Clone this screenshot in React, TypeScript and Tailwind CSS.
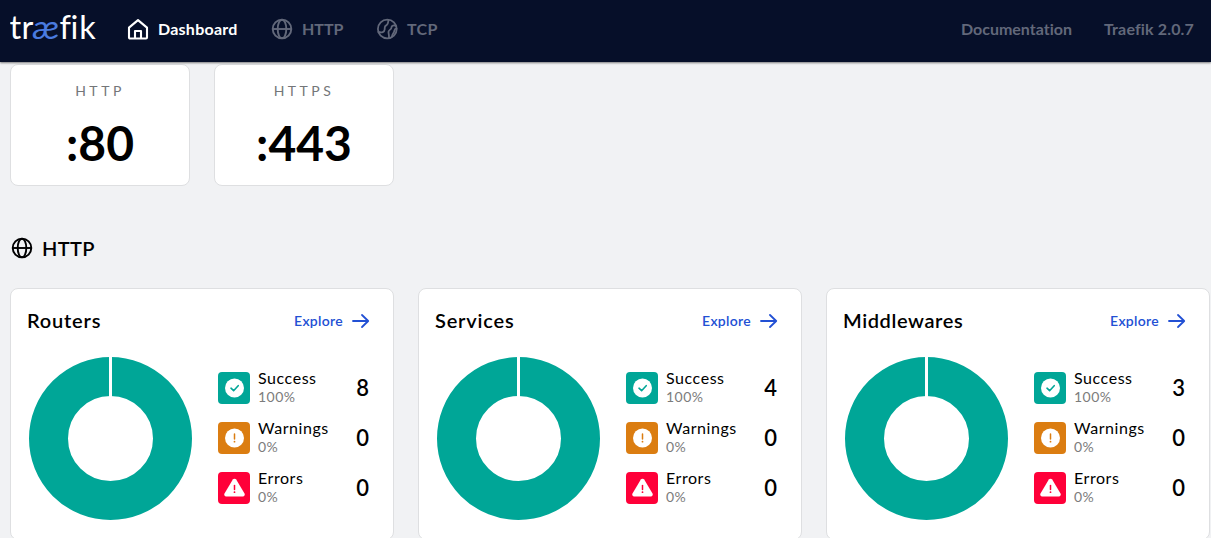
import type { ReactNode } from "react";

function Globe({ className }: { className: string }) {
  return (
    <svg viewBox="0 0 22 22" className={className} fill="none" stroke="currentColor" strokeWidth="1.9">
      <circle cx="11" cy="11" r="9.300" />
      <ellipse cx="11" cy="11" rx="4.300" ry="9.300" />
      <path d="M1.700 11H20.300" />
    </svg>
  );
}

function House() {
  return (
    <svg viewBox="0 0 22 22" className="h-[22px] w-[22px]" fill="none" stroke="currentColor" strokeWidth="2.100" strokeLinejoin="round">
      <path d="M2 9.600 11 2.100 20 9.600V19.500a1 1 0 0 1-1 1H3a1 1 0 0 1-1-1Z" />
      <path d="M8 20.500v-7.500h6v7.500" />
    </svg>
  );
}

function TcpBall() {
  return (
    <svg viewBox="0 0 22 22" className="h-[22px] w-[22px]" fill="none" stroke="currentColor" strokeWidth="1.800" strokeLinejoin="round" strokeLinecap="round">
      <circle cx="11.300" cy="11" r="9.400" />
      <path d="M2.300 13.800c3.600 1.200 6.200.4 6.400-2.600.1-2.100-.4-2.900 1.500-3.800C12 6.500 12.300 5 12.400 2" />
      <path d="M20.300 8.200c-2.200-1.400-5-.7-4.900 1.500.1 1.800-2.800 2-2.900 4.200-.1 1.900.9 3.300.4 6.200" />
      <path d="M20.400 10.300c-2.200.4-1.800 2.100-2.300 3.500-.5 1.500-2 2-2.200 5" />
    </svg>
  );
}

function Logo() {
  return (
    <svg viewBox="0 0 90 56" className="h-14 w-[90px] shrink-0" fontFamily="Lato, sans-serif" fontSize="32.500" fontWeight="400" fill="#fff">
      <text x="-0.500 11.500" y="38">tr</text>
      <text x="22.500" y="38" fontStyle="italic" textLength="27" lengthAdjust="spacingAndGlyphs" fill="#4a7be0">æ</text>
      <text x="49.500 60.500 69.200" y="38">fik</text>
    </svg>
  );
}

function PortCard({ label, port }: { label: string; port: string }) {
  return (
    <div className="flex h-[122px] w-[180px] flex-col items-center rounded-lg border border-[#dedfe1] bg-white pt-[16px]">
      <div className="text-[14px] leading-5 tracking-[3.500px] text-[#747679]">{label}</div>
      <div className="mt-3 text-[48px] leading-[60px] font-bold text-black">{port}</div>
    </div>
  );
}

const CheckBadge = (
  <svg viewBox="0 0 32 32" className="h-8 w-8">
    <circle cx="16.500" cy="16" r="9.500" fill="#fff" />
    <path d="m13 16.200 2.600 2.500 4.600-5" fill="none" stroke="#00a697" strokeWidth="1.600" strokeLinecap="round" strokeLinejoin="round" />
  </svg>
);

const WarningBadge = (
  <svg viewBox="0 0 32 32" className="h-8 w-8">
    <circle cx="16.500" cy="16" r="9.500" fill="#fff" />
    <path d="M16.500 12v5" stroke="#db7d11" strokeWidth="1.500" strokeLinecap="round" />
    <circle cx="16.500" cy="19.700" r="0.900" fill="#db7d11" />
  </svg>
);

const ErrorBadge = (
  <svg viewBox="0 0 32 32" className="h-8 w-8">
    <path d="M14.800 7.600a2 2 0 0 1 3.400 0l8.300 13.900a2 2 0 0 1-1.700 3H8.200a2 2 0 0 1-1.700-3Z" fill="#fff" />
    <path d="M16.500 13.500v4" stroke="#ff0039" strokeWidth="1.500" strokeLinecap="round" />
    <circle cx="16.500" cy="20.200" r="0.900" fill="#ff0039" />
  </svg>
);

function Stat({ icon, color, label, percent, count }: { icon: ReactNode; color: string; label: string; percent: string; count: number }) {
  return (
    <div className="flex h-8 items-center">
      <div className={`h-8 w-8 shrink-0 overflow-hidden rounded ${color}`}>{icon}</div>
      <div className="ml-2 grow">
        <div className="-mt-px text-[16px] leading-[18px] tracking-[0.55px] text-black">{label}</div>
        <div className="pt-px text-[14px] leading-[18px] tracking-[0.500px] text-[#7c7c7c]">{percent}</div>
      </div>
      <div className="text-[22px] leading-8 font-semibold text-black">{count}</div>
    </div>
  );
}

function SummaryCard({ title, tracking, success }: { title: string; tracking: string; success: number }) {
  return (
    <div className="h-[252px] w-[384px] shrink-0 rounded-lg border border-[#dedfe1] bg-white pt-[15px] pr-6 pl-4">
      <div className="flex h-8 items-center justify-between">
        <h2 className={`text-[20px] leading-8 font-semibold text-black ${tracking}`}>{title}</h2>
        <a className="flex items-center text-[#2250d4]">
          <span className="text-[14px] font-semibold tracking-[0.3px]">Explore</span>
          <svg viewBox="0 0 18 16" className="-mr-px mt-px ml-[9px] h-4 w-[18px]" fill="none" stroke="currentColor" strokeWidth="1.800">
            <path d="M1 8h15M10 2l6.200 6L10 14" strokeLinecap="round" strokeLinejoin="round" />
          </svg>
        </a>
      </div>
      <div className="mt-5 flex">
        <svg viewBox="0 0 165 165" className="ml-px h-[165px] w-[165px] shrink-0">
          <circle cx="82.500" cy="82.500" r="62" fill="none" stroke="#00a697" strokeWidth="39" />
          <path d="M82.500 0v41.500" stroke="#fff" strokeWidth="3" />
        </svg>
        <div className="mt-4 ml-[25px] flex grow flex-col gap-[18px]">
          <Stat icon={CheckBadge} color="bg-[#00a697]" label="Success" percent="100%" count={success} />
          <Stat icon={WarningBadge} color="bg-[#db7d11]" label="Warnings" percent="0%" count={0} />
          <Stat icon={ErrorBadge} color="bg-[#ff0039]" label="Errors" percent="0%" count={0} />
        </div>
      </div>
    </div>
  );
}

export default function App() {
  return (
    <div className="h-[538px] w-[1211px] overflow-hidden bg-[#f1f2f4] font-['Lato',sans-serif]">
      <header className="relative flex h-[62px] items-center bg-[#060f29] pr-[17px] pb-[4px] pl-[10px] text-[16px] font-bold text-[#62687a] shadow-[0_1px_2px_rgba(0,0,0,0.5)]">
        <Logo />
        <nav className="ml-[27px] flex items-center">
          <a className="flex w-[144px] items-center gap-[9px] tracking-[0.25px] text-white"><House />Dashboard</a>
          <a className="flex w-[105px] items-center gap-[9px]"><Globe className="h-[22px] w-[22px]" />HTTP</a>
          <a className="flex items-center gap-[9px] tracking-[0.3px]"><TcpBall />TCP</a>
        </nav>
        <div className="ml-auto flex gap-8">
          <a className="[font-variant-ligatures:none]">Documentation</a>
          <a className="tracking-[0.15px] [font-variant-ligatures:none]">Traefik 2.0.7</a>
        </div>
      </header>
      <main className="px-[10px] pt-[2px]">
        <div className="flex gap-6">
          <PortCard label="HTTP" port=":80" />
          <PortCard label="HTTPS" port=":443" />
        </div>
        <div className="mt-[46px] flex h-8 items-center gap-[9px] pl-px text-black">
          <Globe className="h-[22px] w-[22px]" />
          <h1 className="mb-px text-[20px] font-semibold tracking-[0.4px]">HTTP</h1>
        </div>
        <div className="mt-6 flex gap-6">
          <SummaryCard title="Routers" tracking="tracking-[0.8px]" success={8} />
          <SummaryCard title="Services" tracking="tracking-[0.8px]" success={4} />
          <SummaryCard title="Middlewares" tracking="tracking-[0.6px]" success={3} />
        </div>
      </main>
    </div>
  );
}
